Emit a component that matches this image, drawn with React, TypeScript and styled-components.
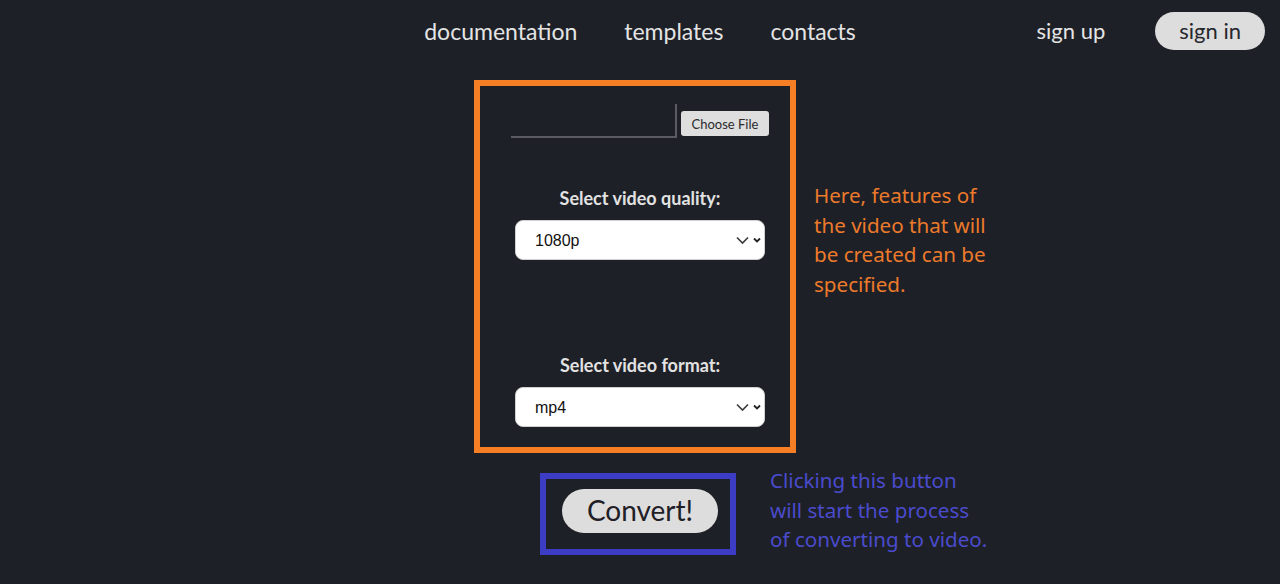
import React from "react";
import styled, { createGlobalStyle } from "styled-components";

const Global = createGlobalStyle`
  html, body { margin: 0; padding: 0; background: #1e2027; }
  body { font-family: Lato, "Noto Sans", sans-serif; color: #e2e2e2; }
  * { box-sizing: border-box; }
`;

const Page = styled.div`
  width: 1280px;
  height: 584px;
  background: #1e2027;
  overflow: hidden;
`;

const Header = styled.header`
  display: grid;
  grid-template-columns: 1fr auto 1fr;
  align-items: center;
  padding-top: 12px;
  height: 50px;
`;

const NavLinks = styled.nav`
  grid-column: 2;
  display: flex;
  gap: 47px;
`;

const NavLink = styled.a<{ $size?: number }>`
  font-family: Lato, sans-serif;
  font-size: ${(p) => p.$size ?? 23}px;
  color: #e4e4e4;
  text-decoration: none;
  line-height: 38px;
`;

const Auth = styled.div`
  grid-column: 3;
  justify-self: end;
  margin-right: 15px;
  display: flex;
  align-items: center;
  gap: 50px;
`;

const SignIn = styled.button`
  height: 38px;
  padding: 0 24px 2px;
  border: none;
  border-radius: 19px;
  background: #dddddd;
  color: #26272d;
  font-family: Lato, sans-serif;
  font-size: 22px;
`;

const Main = styled.main`
  display: flex;
  flex-direction: column;
  margin-top: 30px;
  gap: 20px;
`;

const Row = styled.div<{ $w: number; $shift: number }>`
  display: grid;
  grid-template-columns: 1fr ${(p) => p.$w}px 1fr;
  padding-right: ${(p) => p.$shift}px;
`;

const FormBox = styled.div`
  grid-column: 2;
  border: 6px solid #f67f25;
  padding: 18px 25px 20px 35px;
  display: flex;
  flex-direction: column;
  align-items: center;
`;

const FileRow = styled.div`
  display: flex;
  align-items: flex-start;
  gap: 4px;
`;

const FileField = styled.div`
  width: 166px;
  height: 34px;
  border-right: 2px solid #5a5b60;
  border-bottom: 2px solid #5a5b60;
`;

const ChooseButton = styled.button`
  width: 88px;
  height: 25px;
  margin-top: 7px;
  border: none;
  border-radius: 3px;
  background: #dedede;
  color: #2a2a2e;
  font-family: Lato, sans-serif;
  font-size: 13px;
  padding: 0;
`;

const Label = styled.div<{ $top: number }>`
  margin-top: ${(p) => p.$top}px;
  font-family: Lato, sans-serif;
  font-weight: 700;
  font-size: 18px;
  line-height: 22px;
  color: #e2e2e2;
`;

const SelectWrap = styled.div`
  position: relative;
  margin-top: 11px;
  width: 250px;
  height: 40px;
`;

const Select = styled.select`
  appearance: none;
  width: 100%;
  height: 100%;
  border: 1px solid #d0d0d0;
  border-radius: 8px;
  background: #ffffff;
  color: #111;
  font-family: "Liberation Sans", Arial, sans-serif;
  font-size: 16px;
  padding: 0 0 0 19px;
`;

const Chevrons = styled.svg`
  position: absolute;
  right: 3px;
  top: 16px;
  pointer-events: none;
`;

const Annotation = styled.p<{ $color: string; $left: number; $top: number }>`
  grid-column: 3;
  margin: ${(p) => p.$top}px 0 0 ${(p) => p.$left}px;
  font-family: "Noto Sans", "Open Sans", sans-serif;
  font-size: 20.6px;
  line-height: 29.7px;
  color: ${(p) => p.$color};
  align-self: start;
`;

const ConvertBox = styled.div`
  grid-column: 2;
  border: 6px solid #3c3dc4;
  padding: 10px 12px 9px 16px;
  display: flex;
`;

const ConvertButton = styled.button`
  width: 156px;
  height: 44px;
  border: none;
  border-radius: 22px;
  background: #dddddd;
  color: #1f2026;
  font-family: Lato, sans-serif;
  font-size: 28px;
  padding: 0 0 2px;
`;

const ChevronIcon = () => (
  <Chevrons width="26" height="9" viewBox="0 0 26 9">
    <path d="M1 1.5 L6.5 7 L12 1.5" fill="none" stroke="#3a3a3a" strokeWidth="1.6" />
    <path d="M18 2.5 L21 5.5 L24 2.5" fill="none" stroke="#222" strokeWidth="1.8" />
  </Chevrons>
);

const SelectField = ({ value, options }: { value: string; options: string[] }) => (
  <SelectWrap>
    <Select defaultValue={value}>
      {options.map((o) => (
        <option key={o}>{o}</option>
      ))}
    </Select>
    <ChevronIcon />
  </SelectWrap>
);

export default function App() {
  return (
    <Page>
      <Global />
      <Header>
        <NavLinks>
          <NavLink href="#">documentation</NavLink>
          <NavLink href="#">templates</NavLink>
          <NavLink href="#">contacts</NavLink>
        </NavLinks>
        <Auth>
          <NavLink href="#" $size={22}>sign up</NavLink>
          <SignIn>sign in</SignIn>
        </Auth>
      </Header>
      <Main>
        <Row $w={322} $shift={10}>
          <FormBox>
            <FileRow>
              <FileField />
              <ChooseButton>Choose File</ChooseButton>
            </FileRow>
            <Label $top={49}>Select video quality:</Label>
            <SelectField value="1080p" options={["1080p", "720p", "480p", "360p"]} />
            <Label $top={94}>Select video format:</Label>
            <SelectField value="mp4" options={["mp4", "avi", "mov", "webm"]} />
          </FormBox>
          <Annotation $color="#ec7a2b" $left={18} $top={101}>
            Here, features of
            <br />
            the video that will
            <br />
            be created can be
            <br />
            specified.
          </Annotation>
        </Row>
        <Row $w={196} $shift={4}>
          <ConvertBox>
            <ConvertButton>Convert!</ConvertButton>
          </ConvertBox>
          <Annotation $color="#4a4bcd" $left={34} $top={-7}>
            Clicking this button
            <br />
            will start the process
            <br />
            of converting to video.
          </Annotation>
        </Row>
      </Main>
    </Page>
  );
}
